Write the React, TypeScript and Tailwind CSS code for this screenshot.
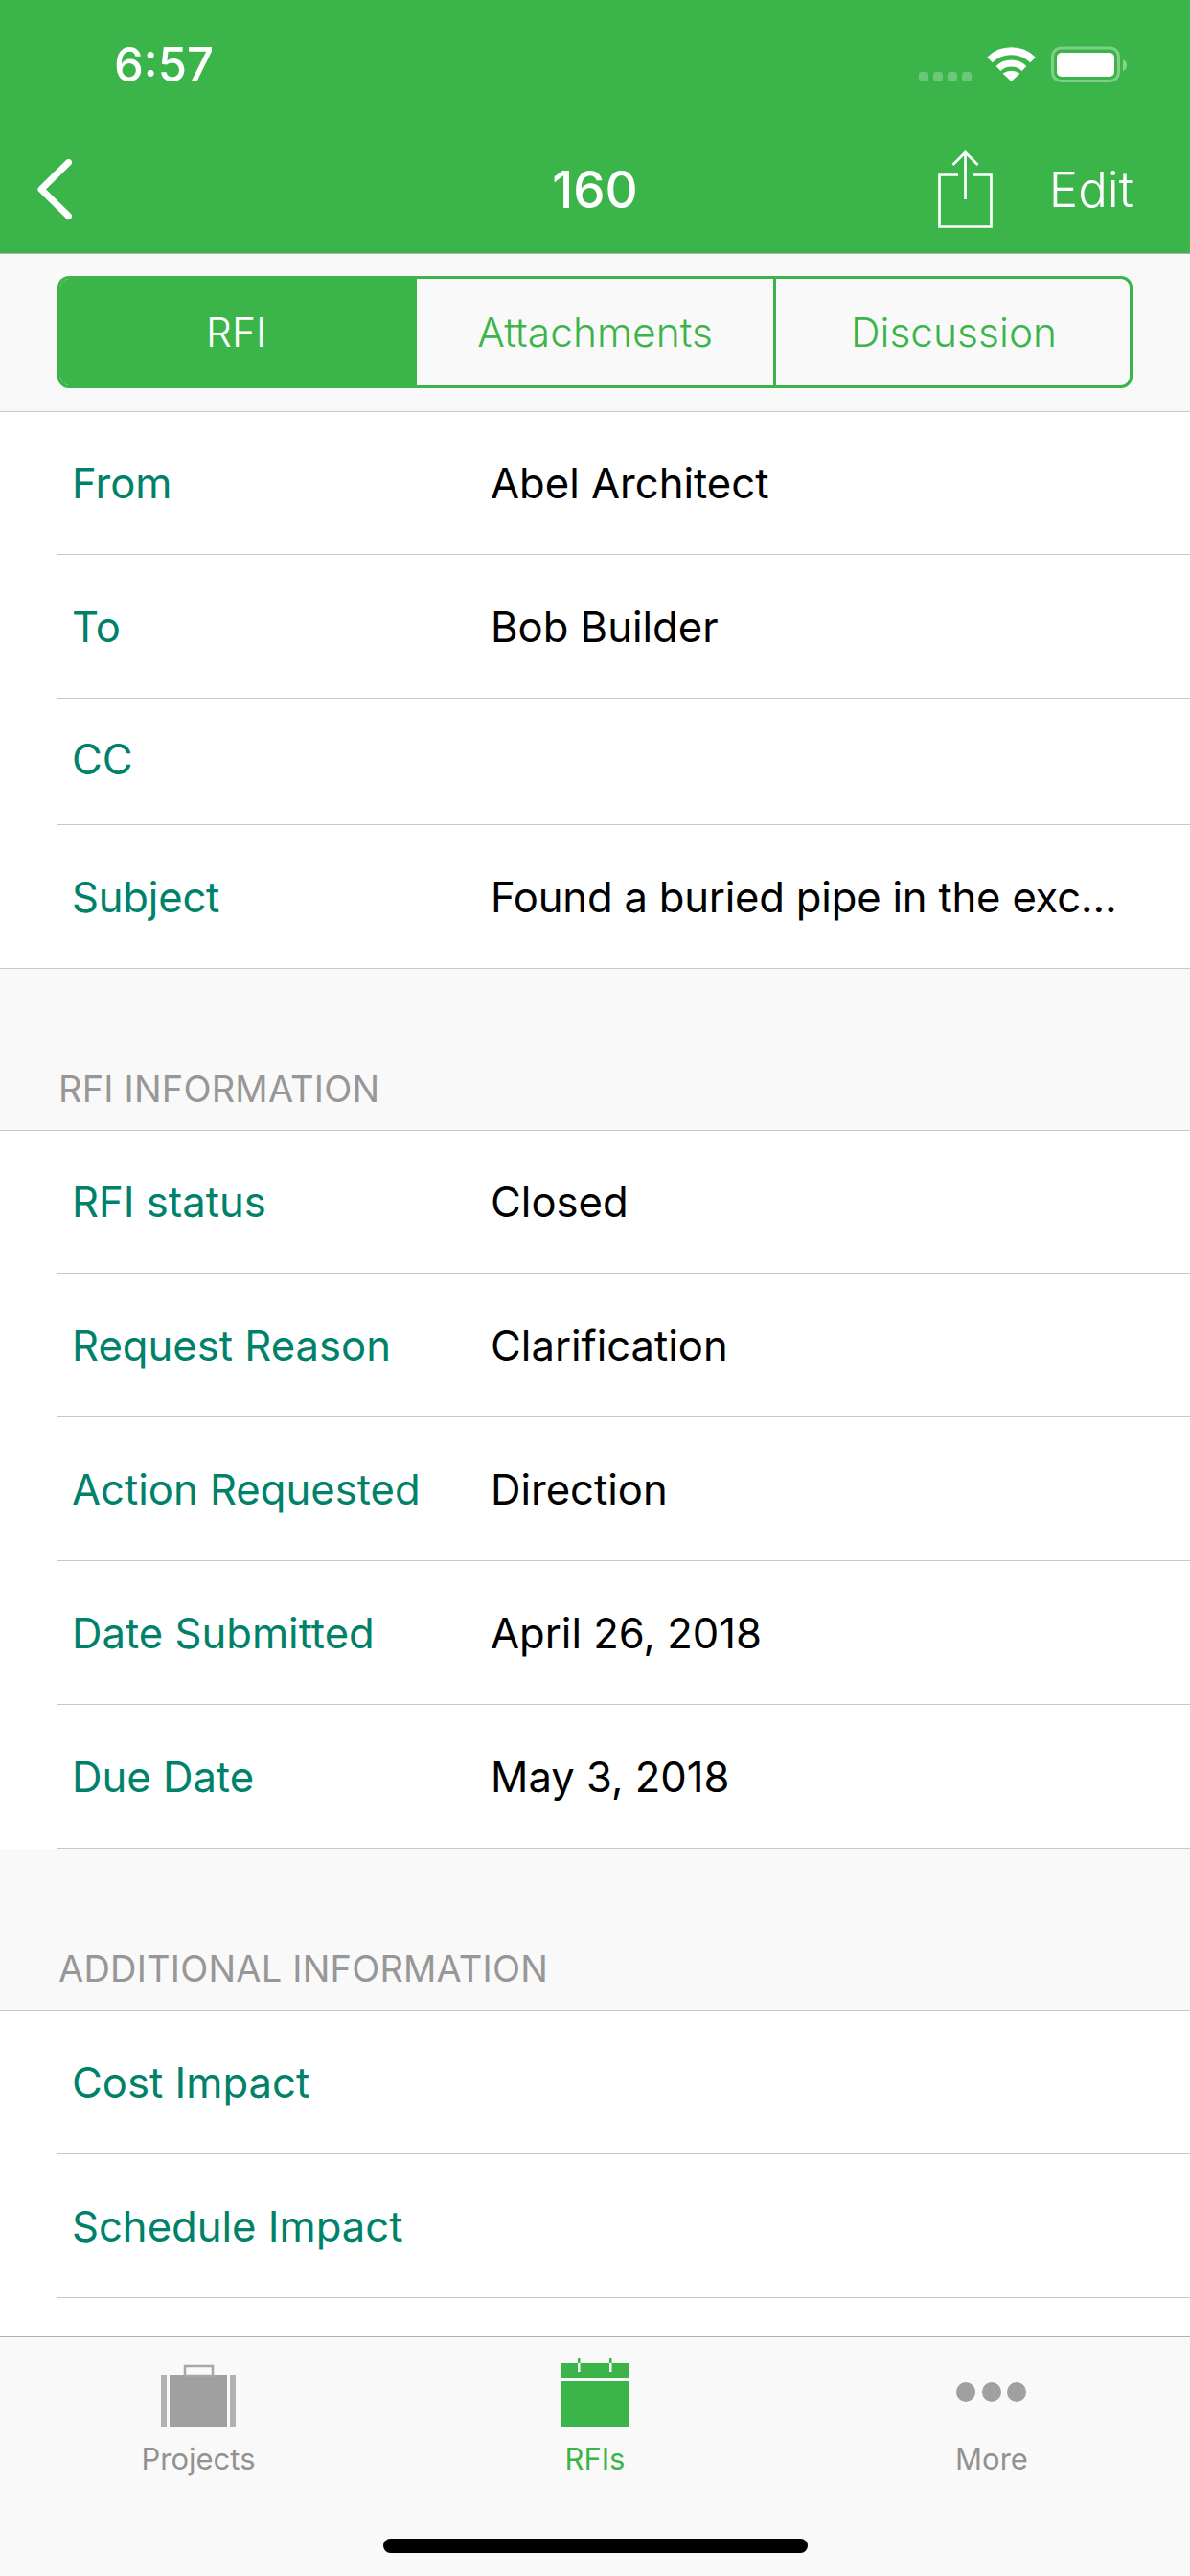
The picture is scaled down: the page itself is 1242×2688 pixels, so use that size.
import React from 'react';

type Field = { label: string; value: string; height: string; last?: boolean; pad?: string };

const fieldGroups: Record<string, Field[]> = {
  main: [
    { label: 'From', value: 'Abel Architect', height: 'h-[149px]', pad: 'pt-[2px]' },
    { label: 'To', value: 'Bob Builder', height: 'h-[150px]', pad: 'pt-[2px]' },
    { label: 'CC', value: '', height: 'h-[132px]', pad: 'pb-[4px]' },
    { label: 'Subject', value: 'Found a buried pipe in the exc…', height: 'h-[150px]', last: true, pad: 'pt-[2px]' },
  ],
  info: [
    { label: 'RFI status', value: 'Closed', height: 'h-[149px]', pad: 'pt-[2px]' },
    { label: 'Request Reason', value: 'Clarification', height: 'h-[150px]', pad: 'pt-[2px]' },
    { label: 'Action Requested', value: 'Direction', height: 'h-[150px]', pad: 'pt-[2px]' },
    { label: 'Date Submitted', value: 'April 26, 2018', height: 'h-[150px]', pad: 'pt-[2px]' },
    { label: 'Due Date', value: 'May 3, 2018', height: 'h-[150px]', pad: 'pt-[2px]' },
  ],
  additional: [
    { label: 'Cost Impact', value: '', height: 'h-[150px]', pad: 'pt-[2px]' },
    { label: 'Schedule Impact', value: '', height: 'h-[150px]', pad: 'pt-[2px]' },
  ],
};

const Row = ({ field }: { field: Field }) => {
  const text = (
    <>
      <span className="w-[452px] shrink-0 pl-[15px] text-[#00816a]">{field.label}</span>
      <span className="text-black">{field.value}</span>
    </>
  );
  if (field.last) {
    return <div className={`flex items-center border-b-[1.5px] border-[#c8c7cc] pl-[60px] tracking-[-0.2px] ${field.height} ${field.pad ?? ''}`}>{text}</div>;
  }
  return (
    <div className={`pl-[60px] ${field.height}`}>
      <div className={`flex h-full items-center border-b-[1.5px] border-[#c8c7cc] ${field.pad ?? ''}`}>{text}</div>
    </div>
  );
};

const SectionHeader = ({ title }: { title: string }) => (
  <div className="flex h-[169px] items-end border-b-[1.5px] border-[#c8c7cc] bg-[#f9f9f9] pb-[21px] pl-[61px] text-[38px] leading-[44px] tracking-[0.2px] text-[#979797]">
    {title}
  </div>
);

const StatusIcons = () => (
  <svg width="218" height="38" viewBox="960 48 218 38" fill="none">
    <g fill="#fff" opacity="0.25">
      <rect x="960" y="75" width="10" height="10" rx="3" />
      <rect x="975" y="75" width="10" height="10" rx="3" />
      <rect x="990" y="75" width="10" height="10" rx="3" />
      <rect x="1005" y="75" width="10" height="10" rx="3" />
    </g>
    <path d="M1034 62.5 A32 32 0 0 1 1079 62.5" stroke="#fff" strokeWidth="8" />
    <path d="M1043 71.5 A19.5 19.5 0 0 1 1070 71.5" stroke="#fff" strokeWidth="7" />
    <path d="M1056.5 85 L1047.5 76.5 Q1056.5 71 1065.5 76.5 Z" fill="#fff" />
    <rect x="1099.5" y="50" width="69" height="34.5" rx="9" stroke="#fff" strokeOpacity="0.35" strokeWidth="3" />
    <rect x="1104" y="55" width="60" height="25" rx="5" fill="#fff" />
    <path d="M1173 62 Q1177 64 1177 68 Q1177 72 1173 74 Z" fill="#fff" opacity="0.4" />
  </svg>
);

const ShareIcon = () => (
  <svg width="60" height="84" viewBox="978 156 60 84" fill="none" stroke="#fff" strokeWidth="2.7">
    <path d="M1000 182.5 H980.5 V236.5 H1034.5 V182.5 H1016" />
    <path d="M1007.5 208 V159" />
    <path d="M994.5 172 L1007.5 159 L1020.5 172" />
  </svg>
);

const BriefcaseIcon = () => (
  <svg width="78" height="72" viewBox="168 2460 78 72">
    <g fill="#a0a0a0">
      <rect x="168" y="2478" width="6" height="54" opacity="0.8" />
      <rect x="177" y="2478" width="60" height="54" />
      <rect x="240" y="2478" width="6" height="54" opacity="0.8" />
    </g>
    <rect x="193" y="2469" width="29" height="10" fill="none" stroke="#a8a8a8" strokeWidth="2.5" />
  </svg>
);

const CalendarIcon = () => (
  <svg width="72" height="72" viewBox="585 2460 72 72">
    <rect x="585" y="2466" width="72" height="15" fill="#3bb54a" />
    <rect x="585" y="2484" width="72" height="48" fill="#3bb54a" />
    <rect x="603" y="2460" width="2.5" height="6" fill="#3bb54a" />
    <rect x="636" y="2460" width="2.5" height="6" fill="#3bb54a" />
    <rect x="603" y="2466" width="2.5" height="9" fill="#fff" />
    <rect x="636" y="2466" width="2.5" height="9" fill="#fff" />
  </svg>
);

const MoreIcon = () => (
  <svg width="74" height="72" viewBox="998 2460 74 72" fill="#a0a0a0">
    <circle cx="1008" cy="2496" r="10" />
    <circle cx="1035" cy="2496" r="10" />
    <circle cx="1061" cy="2496" r="10" />
  </svg>
);

const App = () => {
  return (
    <div className="flex h-[2688px] w-[1242px] flex-col overflow-hidden bg-white font-['Inter',sans-serif] text-[43.6px]">
      <header className="border-b-[1.5px] border-[#b2b2b2] bg-[#3bb54a] text-white">
        <div className="flex h-[132px] items-start justify-between pl-[119px] pr-[65px] pt-[48px]">
          <span className="text-[49px] font-medium leading-[40px]">6:57</span>
          <StatusIcons />
        </div>
        <div className="grid h-[132px] grid-cols-[minmax(0,1fr)_auto_minmax(0,1fr)] items-center">
          <div className="pl-[38px]">
            <svg width="38" height="64" viewBox="38 167 38 64" fill="none">
              <path d="M71.5 170.5 L43 198.5 L71.5 226.5" stroke="#fff" strokeWidth="7" strokeLinecap="round" strokeLinejoin="round" />
            </svg>
          </div>
          <span className="text-[53px] font-medium leading-[60px]">160</span>
          <div className="flex items-center justify-end pr-[59px]">
            <ShareIcon />
            <span className="ml-[57px] text-[51px] font-light leading-[60px]">Edit</span>
          </div>
        </div>
      </header>

      <div className="flex h-[165px] items-center border-b-[1.5px] border-[#c8c7cc] bg-[#f9f9f9] px-[60px] pb-[1px]">
        <div className="flex h-[117px] w-full overflow-hidden rounded-[12px] border-[3px] border-[#3bb54a] text-[42.5px] font-light text-[#3bb54a]">
          <div className="flex w-[372px] items-center justify-center bg-[#3bb54a] pr-[5px] text-white">RFI</div>
          <div className="flex w-[375px] items-center justify-center border-r-[3px] border-[#3bb54a]">Attachments</div>
          <div className="flex flex-1 items-center justify-center pl-[2px]">Discussion</div>
        </div>
      </div>

      <main className="flex-1 overflow-hidden">
        {fieldGroups.main.map((field) => (
          <Row key={field.label} field={field} />
        ))}
        <SectionHeader title="RFI INFORMATION" />
        {fieldGroups.info.map((field) => (
          <Row key={field.label} field={field} />
        ))}
        <SectionHeader title="ADDITIONAL INFORMATION" />
        {fieldGroups.additional.map((field) => (
          <Row key={field.label} field={field} />
        ))}
      </main>

      <footer className="h-[250px] border-t-[1.5px] border-[#b2b2b2] bg-[#f9f9f9]">
        <div className="grid grid-cols-3 pt-[21px] text-[31px] leading-[36px]">
          <div className="flex flex-col items-center gap-[16px] text-[#929292]">
            <BriefcaseIcon />
            <span>Projects</span>
          </div>
          <div className="flex flex-col items-center gap-[16px] text-[#3bb54a]">
            <CalendarIcon />
            <span>RFIs</span>
          </div>
          <div className="flex flex-col items-center gap-[16px] text-[#929292]">
            <MoreIcon />
            <span>More</span>
          </div>
        </div>
        <div className="mx-auto mt-[65px] h-[15px] w-[443px] rounded-full bg-black" />
      </footer>
    </div>
  );
};

export default App;
